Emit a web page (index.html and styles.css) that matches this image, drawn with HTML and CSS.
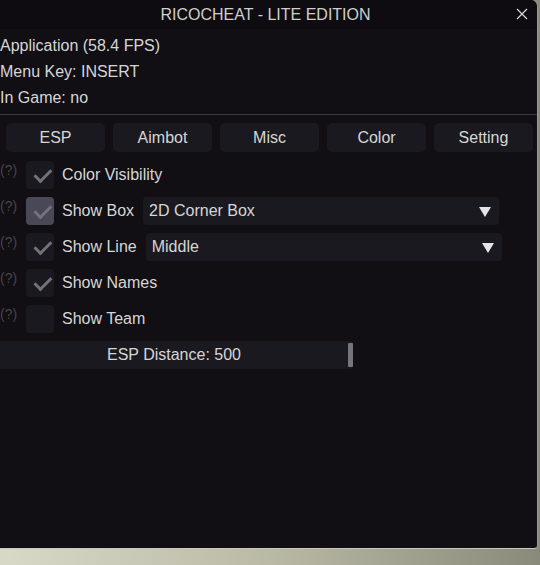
FILE: index.html
```html
<!DOCTYPE html>
<html lang="en">
<head>
    <meta charset="UTF-8">
    <meta name="viewport" content="width=device-width, initial-scale=1.0">
    <title>RicoCheat - Lite Edition</title>
    <link rel="stylesheet" href="styles.css">
</head>
<body>
    <div id="window">
        <header class="titlebar">
            <span class="title">RICOCHEAT - LITE EDITION</span>
            <svg class="close" width="12" height="12" viewBox="0 0 12 12">
                <path d="M1 1 L11 11 M11 1 L1 11" stroke="#d8d8d8" stroke-width="1.2"/>
            </svg>
        </header>

        <section class="info">
            <p>Application (58.4 FPS)</p>
            <p>Menu Key: INSERT</p>
            <p>In Game: no</p>
        </section>

        <hr class="separator">

        <nav class="tabs">
            <div class="tab">ESP</div>
            <div class="tab">Aimbot</div>
            <div class="tab">Misc</div>
            <div class="tab">Color</div>
            <div class="tab">Setting</div>
        </nav>

        <section class="options">
            <div class="option">
                <span class="help">(?)</span>
                <span class="checkbox checked"></span>
                <span class="label">Color Visibility</span>
            </div>
            <div class="option">
                <span class="help">(?)</span>
                <span class="checkbox checked hover"></span>
                <span class="label">Show Box</span>
                <div class="dropdown">2D Corner Box <span class="arrow"></span></div>
            </div>
            <div class="option">
                <span class="help">(?)</span>
                <span class="checkbox checked"></span>
                <span class="label">Show Line</span>
                <div class="dropdown">Middle <span class="arrow"></span></div>
            </div>
            <div class="option">
                <span class="help">(?)</span>
                <span class="checkbox checked"></span>
                <span class="label">Show Names</span>
            </div>
            <div class="option">
                <span class="help">(?)</span>
                <span class="checkbox"></span>
                <span class="label">Show Team</span>
            </div>

            <div class="slider">
                <span class="slider-text">ESP Distance: 500</span>
                <span class="slider-grab"></span>
            </div>
        </section>
    </div>
</body>
</html>
```

FILE: styles.css
```css
body {
    margin: 0;
    width: 540px;
    height: 565px;
    overflow: hidden;
    font-family: 'Liberation Sans', Arial, sans-serif;
    color: #d6d6d6;
    background: linear-gradient(to right, #d9d9c8, #b9b9a6 50%, #8a8a7a);
}

#window {
    width: 537px;
    height: 548px;
    background-color: #110e14;
    border-right: 1px solid #9a9a92;
    border-bottom: 1px solid #c8c8bc;
    border-top-right-radius: 7px;
    border-bottom-right-radius: 4px;
    overflow: hidden;
}

.titlebar {
    height: 29px;
    background-color: #0e0c10;
    display: flex;
    align-items: center;
    justify-content: center;
    position: relative;
}

.title {
    font-size: 16px;
    color: #cfcfcf;
    margin-left: -6px;
}

.close {
    position: absolute;
    right: 9px;
    top: 8px;
}

.info {
    padding-top: 4px;
}

.info p {
    margin: 0;
    height: 26px;
    line-height: 26px;
    font-size: 16px;
}

.separator {
    margin: 3px 0 0 0;
    border: none;
    height: 1px;
    background-color: #3a3840;
}

.tabs {
    display: flex;
    gap: 8px;
    padding: 8px 0 0 6px;
}

.tab {
    width: 99px;
    height: 29px;
    line-height: 29px;
    text-align: center;
    font-size: 16px;
    background-color: #1b1920;
    border-radius: 5px;
}

.options {
    padding-top: 9px;
    display: flex;
    flex-direction: column;
    gap: 8px;
}

.option {
    display: flex;
    align-items: center;
    height: 28px;
}

.help {
    width: 26px;
    font-size: 14px;
    color: #46444a;
    align-self: flex-start;
    margin-top: 1px;
}

.checkbox {
    width: 28px;
    height: 28px;
    border-radius: 4px;
    background-color: #1b1920;
    position: relative;
}

.checkbox.hover {
    background-color: #4a4756;
}

.checkbox.checked::after {
    content: '';
    position: absolute;
    left: 7px;
    top: 5px;
    width: 14px;
    height: 7px;
    border-left: 3px solid #737179;
    border-bottom: 3px solid #737179;
    transform: rotate(-45deg) translate(-1px, 3px);
}

.label {
    font-size: 16px;
    margin-left: 8px;
}

.dropdown {
    width: 350px;
    height: 28px;
    line-height: 28px;
    margin-left: 9px;
    padding-left: 6px;
    font-size: 16px;
    background-color: #1b1920;
    border-radius: 4px;
    position: relative;
}

.arrow {
    position: absolute;
    right: 8px;
    top: 10px;
    width: 0;
    height: 0;
    border-left: 6px solid transparent;
    border-right: 6px solid transparent;
    border-top: 10px solid #e4e4e8;
}

.slider {
    width: 353px;
    height: 28px;
    background-color: #1b1920;
    border-radius: 0 3px 3px 0;
    display: flex;
    align-items: center;
}

.slider-text {
    flex: 1;
    text-align: center;
    font-size: 16px;
}

.slider-grab {
    width: 5px;
    height: 24px;
    background-color: #76747c;
    border-radius: 1px;
}
```
